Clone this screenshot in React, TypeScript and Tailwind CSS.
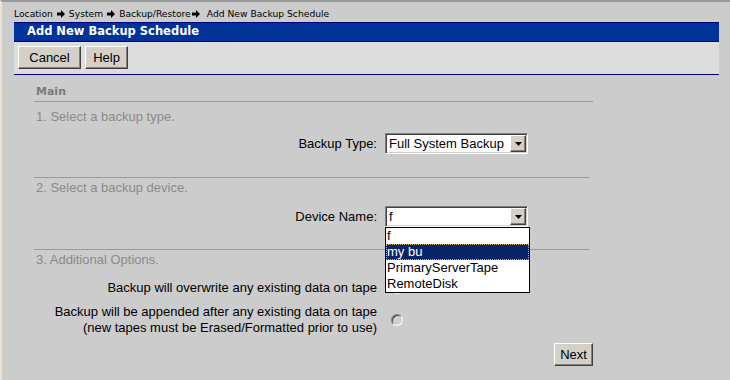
import React from "react";

const raised =
  "border border-t-white border-l-white border-r-[#404040] border-b-[#404040] shadow-[inset_-1px_-1px_#808080] bg-[#d4d0c8]";

function Arrow() {
  return (
    <svg width="8" height="8" viewBox="0 0 8 8" className="inline-block">
      <path d="M0 2.5h4V0l4 4-4 4V5.5H0z" fill="#000" />
    </svg>
  );
}

function Button({ label, w }: { label: string; w: string }) {
  return (
    <div className={`${raised} ${w} h-[23px] flex items-center justify-center text-[13px] text-black`}>
      {label}
    </div>
  );
}

function Select({ value, open }: { value: string; open?: boolean }) {
  return (
    <div className="relative w-[143px] h-[21px] bg-white border border-t-[#808080] border-l-[#808080] border-r-white border-b-white shadow-[inset_1px_1px_#404040,inset_-1px_-1px_#d4d0c8] flex items-center">
      <span className="pl-[3px] text-[13px] leading-none flex-1">{value}</span>
      <div className={`${raised} w-[16px] h-[17px] mr-[1px] flex items-center justify-center`}>
        <svg width="7" height="4" viewBox="0 0 7 4">
          <path d="M0 0h7L3.5 4z" fill="#000" />
        </svg>
      </div>
      {open && (
        <div className="absolute left-[-1px] top-[20px] w-[145px] bg-white border border-black z-10 text-[13px] leading-[16px]">
          <div className="h-[16px] pl-[1px]">f</div>
          <div className="h-[16px] pl-[1px] bg-[#0a246a] text-white outline-1 outline-dotted outline-[#c8b870] -outline-offset-1">my bu</div>
          <div className="h-[16px] pl-[1px]">PrimaryServerTape</div>
          <div className="h-[16px] pl-[1px]">RemoteDisk</div>
        </div>
      )}
    </div>
  );
}

function Radio() {
  return (
    <div className="ml-[6px] w-[12px] h-[12px] rounded-full bg-[#d4d0c8] border border-t-[#808080] border-l-[#808080] border-r-white border-b-white shadow-[inset_1px_1px_#404040]" />
  );
}

export default function App() {
  return (
    <div
      className="w-[730px] h-[380px] bg-[#cccccc] border-t-2 border-t-[#999999] border-l-2 border-l-[#e8e2d4] overflow-hidden text-black"
      style={{ fontFamily: '"Liberation Sans", Arial, sans-serif' }}
    >
      {/* breadcrumb */}
      <div
        className="pl-[12px] pt-[3px] h-[20px] flex items-center gap-[4px] text-[9.2px]"
        style={{ fontFamily: '"DejaVu Sans", Verdana, sans-serif' }}
      >
        <span>Location</span>
        <Arrow />
        <span>System</span>
        <Arrow />
        <span>Backup/Restore</span>
        <span className="-ml-[3px]"><Arrow /></span>
        <span className="ml-[3px]">Add New Backup Schedule</span>
      </div>

      {/* title bar */}
      <div className="ml-[12px] w-[705px]">
        <div
          className="h-[20px] bg-[#003399] border-y border-[#000080] flex items-center pl-[13px] text-white font-bold text-[11.5px]"
          style={{ fontFamily: '"DejaVu Sans", Verdana, sans-serif' }}
        >
          Add New Backup Schedule
        </div>
        <div className="h-[33px] bg-[#dddddd] border-b border-[#000080] flex items-center gap-[4px] pl-[4px] pb-[1px]">
          <Button label="Cancel" w="w-[63px]" />
          <Button label="Help" w="w-[43px]" />
        </div>
      </div>

      {/* form */}
      <div className="ml-[32px] w-[559px]">
        <div
          className="pt-[10px] pb-[2px] h-[27px] border-b border-[#999999] pl-[2px] font-bold text-[11px] leading-[14px] text-[#7a7a7a]"
          style={{ fontFamily: '"DejaVu Sans", Verdana, sans-serif' }}
        >
          Main
        </div>

        <div className="mt-[7px] pl-[2px] text-[13px] leading-[16px] text-[#8a8a8a]">1. Select a backup type.</div>
        <div className="mt-[8px] grid grid-cols-[343px_1fr] gap-x-[8px] items-center">
          <div className="text-right text-[13px]">Backup Type:</div>
          <Select value="Full System Backup" />
        </div>
        <div className="mt-[23px] w-[556px] border-b border-[#999999]" />

        <div className="mt-[2px] pl-[2px] text-[13px] leading-[16px] text-[#8a8a8a]">2. Select a backup device.</div>
        <div className="mt-[10px] grid grid-cols-[343px_1fr] gap-x-[8px] items-center">
          <div className="text-right text-[13px]">Device Name:</div>
          <Select value="f" open />
        </div>
        <div className="mt-[22px] w-[556px] border-b border-[#999999]" />

        <div className="mt-[2px] pl-[2px] text-[13px] leading-[16px] text-[#8a8a8a]">3. Additional Options.</div>
        <div className="mt-[12px] grid grid-cols-[343px_1fr] gap-x-[8px] items-center text-[13px] leading-[16px]">
          <div className="text-right">Backup will overwrite any existing data on tape</div>
          <Radio />
        </div>
        <div className="mt-[8px] grid grid-cols-[343px_1fr] gap-x-[8px] items-center text-[13px] leading-[16px]">
          <div className="text-right">
            Backup will be appended after any existing data on tape
            <br />
            (new tapes must be Erased/Formatted prior to use)
          </div>
          <Radio />
        </div>

        <div className="mt-[7px] flex justify-end">
          <Button label="Next" w="w-[39px]" />
        </div>
      </div>
    </div>
  );
}
